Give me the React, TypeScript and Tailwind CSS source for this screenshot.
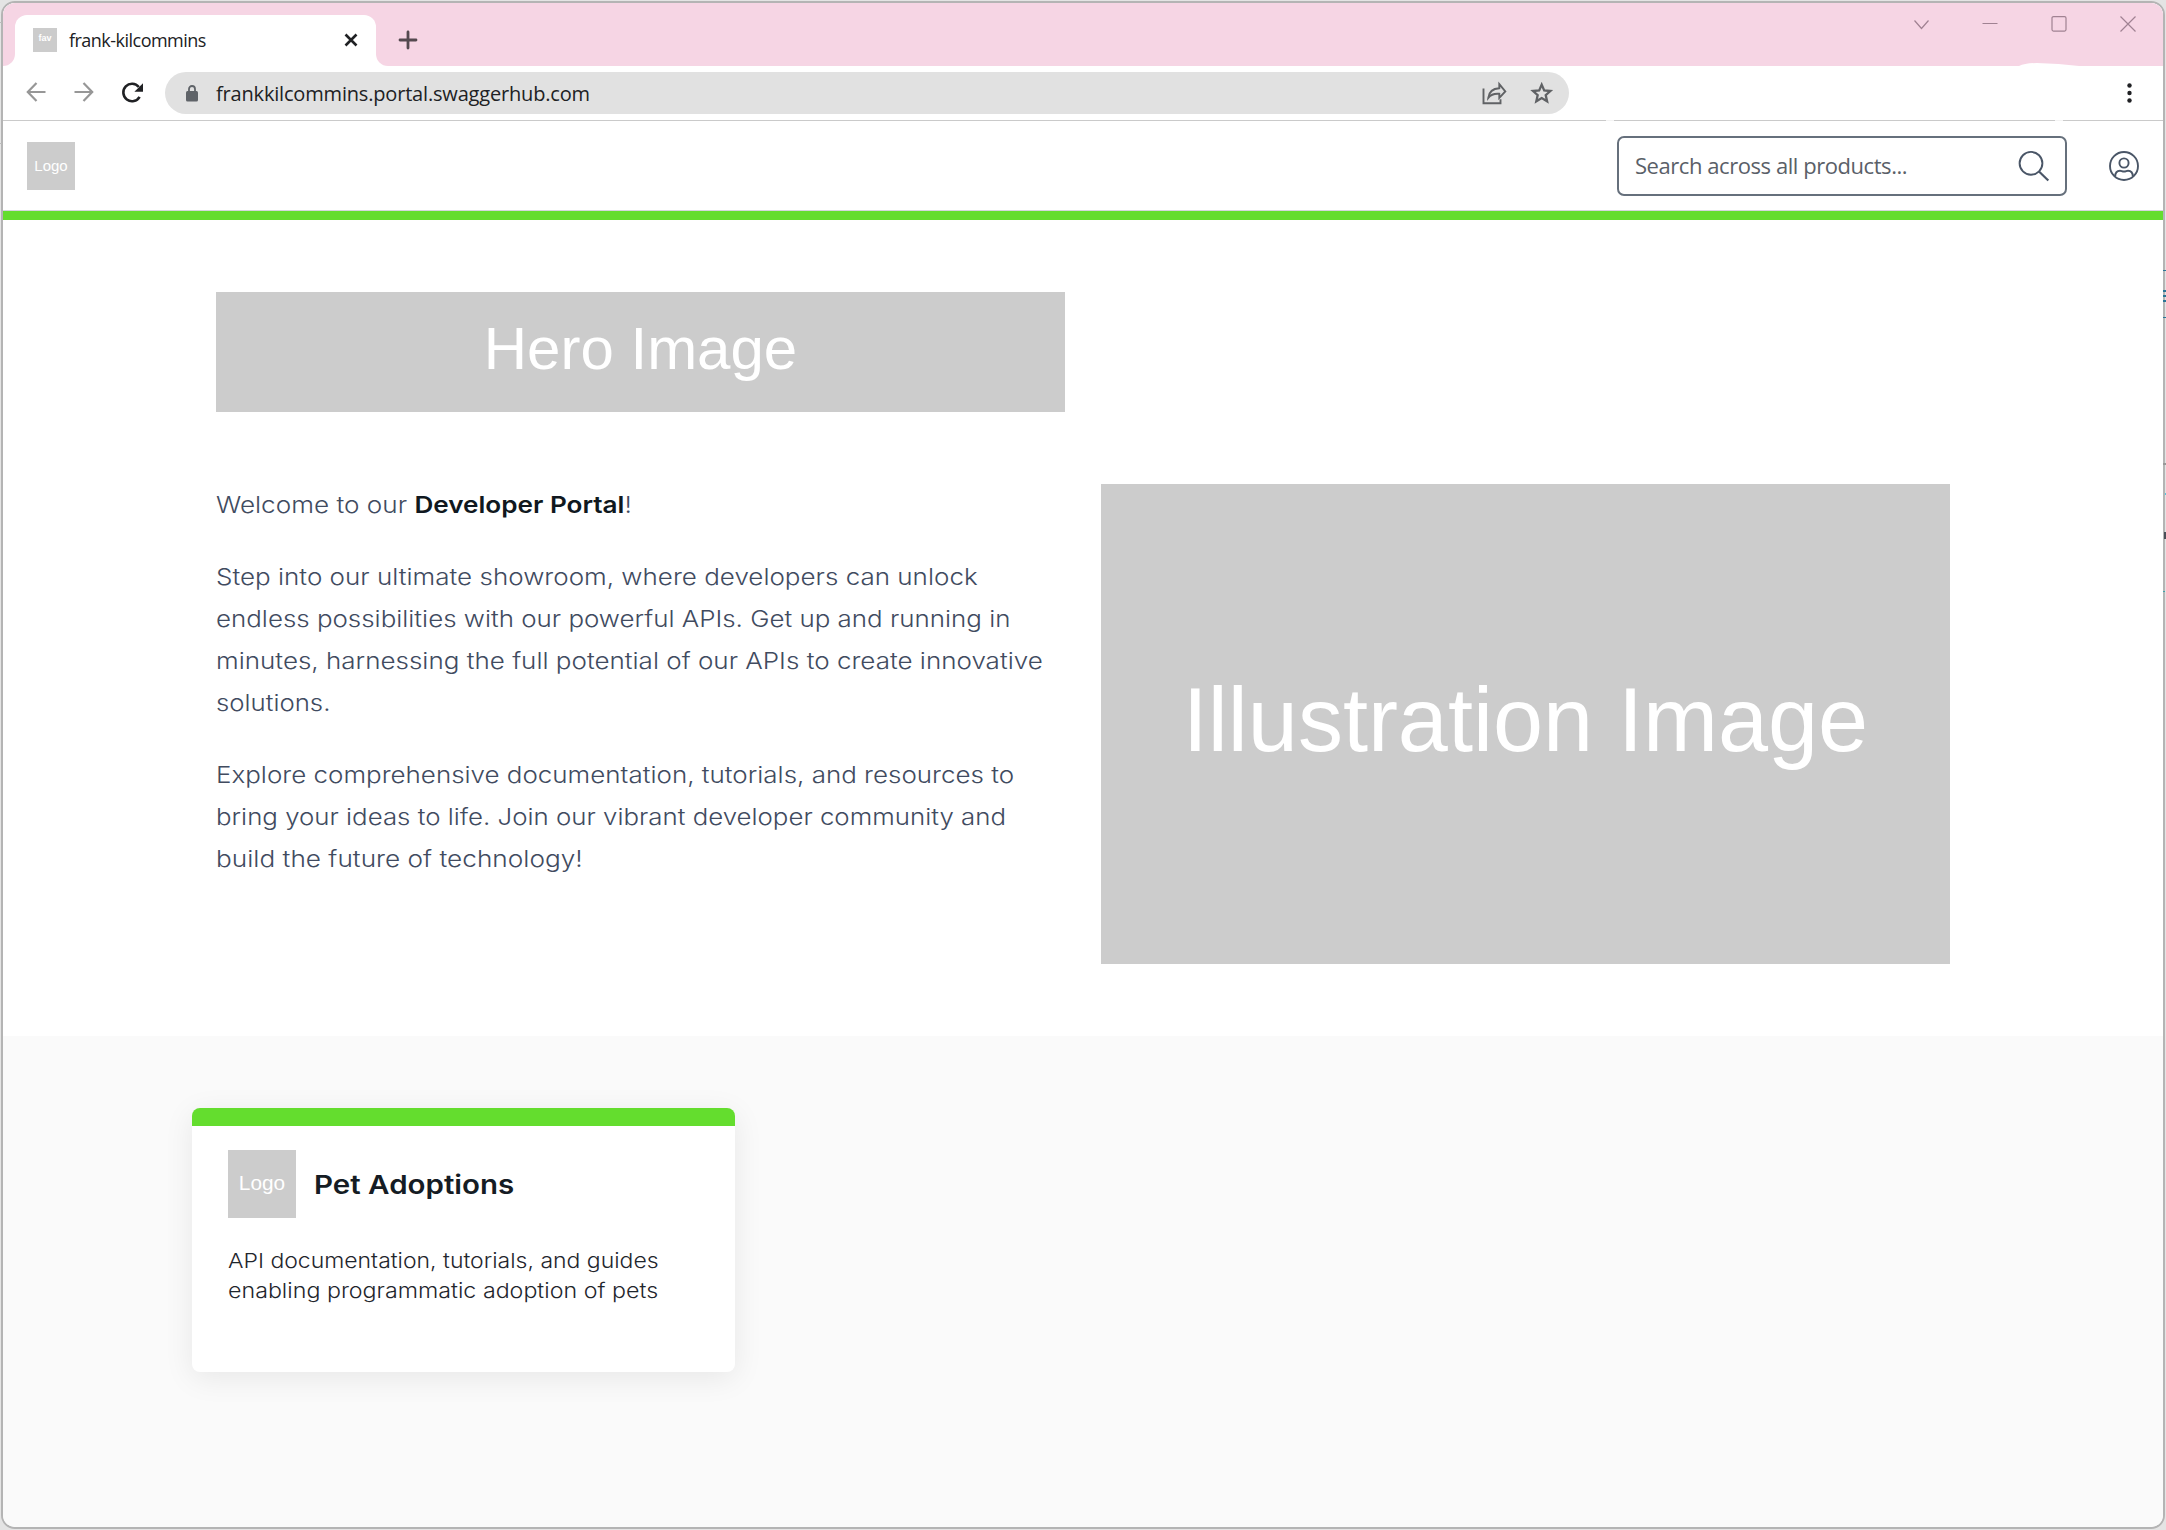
import React from "react";

/* Window chrome: tab strip with the active tab and window controls. */
function TabStrip() {
  return (
    <div className="relative flex h-[63px] shrink-0">
      <div className="w-3 bg-white">
        <div className="h-full w-full rounded-br-[12px] bg-[#f6d5e4]" />
      </div>
      <div className="bg-[#f6d5e4] pt-3">
        <div className="flex h-[51px] w-[361px] items-center rounded-t-[12px] bg-white pr-[18px] pb-[2px] pl-[18px]">
          <div className="flex size-6 items-center justify-center bg-[#ccc] pb-0.5 font-['Liberation_Sans',sans-serif] text-[9px] leading-none font-bold text-white">
            fav
          </div>
          <span className="ml-3 font-['Open_Sans',sans-serif] text-[18px] leading-none tracking-[-0.52px] text-[#202124]">
            frank-kilcommins
          </span>
          <svg className="ml-auto" width="14" height="14" viewBox="0 0 14 14" stroke="#202124" strokeWidth="2.600">
            <path d="M1.500 1.500l11 11M12.500 1.500l-11 11" />
          </svg>
        </div>
      </div>
      <div className="flex grow bg-white">
        <div className="flex grow items-start justify-between rounded-bl-[12px] bg-[#f6d5e4]">
          <svg className="mt-[27px] ml-[22px]" width="20" height="20" viewBox="0 0 20 20" stroke="#54494f" strokeWidth="2.800" strokeLinecap="round">
            <path d="M10 2v16M2 10h16" />
          </svg>
          <svg className="mt-[12px] mr-[27px]" width="222" height="18" viewBox="0 0 222 18" fill="none" stroke="#a08292" strokeWidth="1.200">
            <path d="M.5 5.500l7 8 7-8" />
            <path d="M68.500 8.500h15" />
            <rect x="138" y="1.600" width="14" height="14.500" rx="1.500" />
            <path d="M206.500 1.500l15 15M221.500 1.500l-15 15" />
          </svg>
        </div>
      </div>
      <svg className="absolute right-[84px] bottom-0" width="60" height="3" viewBox="0 0 60 3" fill="#fff">
        <path d="M0 3Q6 0 18 0q22 .5 42 3z" />
      </svg>
    </div>
  );
}

function Toolbar() {
  return (
    <div className="relative flex h-[55px] shrink-0 items-center border-b border-[#cacaca] bg-white">
      <svg className="ml-[23px]" width="118" height="22" viewBox="0 0 118 22" fill="none" stroke="#979797" strokeWidth="2.200">
        <path d="M19.500 10H2M10.500 1L1.800 10l8.700 9M48.500 10H66M57.500 1l8.700 9-8.700 9" />
        <path d="M113.600 14.800a8.700 8.700 0 1 1-.8-9.800" stroke="#202124" strokeWidth="2.600" />
        <path d="M117 1.200v8.600h-8.600z" fill="#202124" stroke="none" />
      </svg>
      <div className="ml-[21px] flex h-[42px] w-[1404px] items-center rounded-full bg-[#e1e1e1]">
        <svg className="ml-[21px]" width="12" height="18" viewBox="0 0 12 18" fill="none">
          <rect y="7" width="12" height="10.500" rx="1.500" fill="#5f6368" />
          <path d="M3 8V5a3 3 0 0 1 6 0v3" stroke="#5f6368" strokeWidth="1.800" />
        </svg>
        <span className="ml-[18px] pt-px font-['Open_Sans',sans-serif] text-[20px] leading-none tracking-[-0.18px] text-[#202124]">
          frankkilcommins.portal.swaggerhub.com
        </span>
        <svg className="mr-[15px] ml-auto" width="72" height="24" viewBox="0 0 72 24" fill="none" stroke="#606265" strokeWidth="1.900">
          <path d="M1.500 7.500v14.800h17v-4" />
          <path d="M17.300 3.200l6 7.200-6 6.400v-4c-5.500-.5-8.500.8-11 4 .6-5.200 4-9.300 11-9.600z" />
          <path d="M59.700 3.600l2.500 5.800 6.200.6-4.700 4.100 1.400 6.200-5.400-3.300-5.400 3.300 1.400-6.200-4.700-4.100 6.200-.6z" strokeWidth="2.300" />
        </svg>
      </div>
      <svg className="mr-[31px] ml-auto" width="5" height="21" viewBox="0 0 5 21" fill="#202124">
        <circle cx="2.500" cy="2.500" r="2.200" />
        <circle cx="2.500" cy="10" r="2.200" />
        <circle cx="2.500" cy="17.500" r="2.200" />
      </svg>
      <div className="absolute right-[549px] -bottom-px h-px w-2 bg-white/80" />
      <div className="absolute right-[100px] -bottom-px h-px w-2 bg-white/80" />
    </div>
  );
}

function PortalHeader() {
  return (
    <header className="flex h-[99px] shrink-0 items-center border-b-[9px] border-[#64dd2e]">
      <div className="flex h-[90px] grow items-center border-b border-[#d5d5dc]">
        <div className="ml-6 flex size-12 items-center justify-center bg-[#ccc] pb-px font-['Liberation_Sans',sans-serif] text-[15px] leading-none text-white">
          Logo
        </div>
        <div className="mr-[24px] ml-auto flex items-center">
          <div className="flex h-[60px] w-[450px] items-center justify-between rounded-[7px] border-2 border-[#66707c] pr-[15px] pl-[16px]">
            <span className="pb-[2px] font-['Open_Sans',sans-serif] text-[22px] leading-none tracking-[-0.44px] text-[#5a6068]">
              Search across all products...
            </span>
            <svg width="32" height="32" viewBox="0 0 32 32" fill="none" stroke="#4a5667" strokeWidth="1.900">
              <circle cx="13" cy="13.300" r="11.400" />
              <path d="M21 21.500l9.300 9" strokeWidth="2.200" />
            </svg>
          </div>
          <svg className="ml-[42px]" width="30" height="30" viewBox="0 0 30 30" fill="none" stroke="#4a5667" strokeWidth="1.900">
            <circle cx="15" cy="15" r="14" />
            <circle cx="15" cy="12" r="4.600" />
            <path d="M6.200 25.500c0-4 1.800-5.800 4.800-5.800 1.500 0 2 .8 4 .8s2.500-.8 4-.8c3 0 4.800 1.800 4.800 5.800" />
          </svg>
        </div>
      </div>
    </header>
  );
}

function Placeholder({ className, children }: { className: string; children: string }) {
  return (
    <div className={`flex items-center justify-center bg-[#ccc] font-['Liberation_Sans',sans-serif] leading-none text-white ${className}`}>
      {children}
    </div>
  );
}

/* One line of wide-set copy; `stretch` is a horizontal scale class. */
function Line({ children, stretch = "scale-x-[1.125]" }: { children: React.ReactNode; stretch?: string }) {
  return <span className={`block origin-left whitespace-nowrap ${stretch}`}>{children}</span>;
}

function Hero() {
  return (
    <section className="grid shrink-0 grid-cols-[849px_849px] gap-x-9 gap-y-[72px] bg-white py-[72px] pl-[213px]">
      <Placeholder className="h-[120px] pb-[7px] text-[60px]">Hero Image</Placeholder>
      <div />
      <div className="space-y-[30px] font-['Inter',sans-serif] text-[23px] leading-[42px] font-[350] text-[#414b5f]">
        <p>
          <Line stretch="scale-x-[1.135]">
            Welcome to our <strong className="font-[580] text-[#101820]">Developer Portal</strong>!
          </Line>
        </p>
        <p>
          <Line stretch="scale-x-[1.130]">Step into our ultimate showroom, where developers can unlock</Line>
          <Line stretch="scale-x-[1.126]">endless possibilities with our powerful APIs. Get up and running in</Line>
          <Line stretch="scale-x-[1.130]">minutes, harnessing the full potential of our APIs to create innovative</Line>
          <Line stretch="scale-x-[1.120]">solutions.</Line>
        </p>
        <p>
          <Line stretch="scale-x-[1.128]">Explore comprehensive documentation, tutorials, and resources to</Line>
          <Line stretch="scale-x-[1.123]">bring your ideas to life. Join our vibrant developer community and</Line>
          <Line stretch="scale-x-[1.139]">build the future of technology!</Line>
        </p>
      </div>
      <Placeholder className="h-[480px] pb-[9px] text-[90px]">Illustration Image</Placeholder>
    </section>
  );
}

function Products() {
  return (
    <section className="grow bg-[#fafafa] pt-[72px] pl-[189px]">
      <article className="h-[264px] w-[543px] overflow-hidden rounded-[8px] border-t-[18px] border-[#64dd2e] bg-white px-9 pt-6 font-['Inter',sans-serif] shadow-[0_6px_30px_rgba(0,0,0,0.08)]">
        <div className="flex items-center">
          <Placeholder className="size-[68px] pb-[2px] text-[20.8px]">Logo</Placeholder>
          <h2 className="ml-[18px] pt-[2px] text-[26px] leading-none font-[580] text-[#151c24]">
            <Line stretch="scale-x-[1.135]">Pet Adoptions</Line>
          </h2>
        </div>
        <p className="mt-[28px] text-[20.500px] leading-[30px] font-[350] text-[#1f262d]">
          <Line stretch="scale-x-[1.121]">API documentation, tutorials, and guides</Line>
          <Line stretch="scale-x-[1.133]">enabling programmatic adoption of pets</Line>
        </p>
      </article>
    </section>
  );
}

/* Slivers of the windows behind, seen at the frame's edges. */
function EdgeMarks() {
  return (
    <>
      <div className="absolute top-[270px] right-0 h-px w-[3px] bg-[#2b7596]" />
      <div className="absolute top-[290px] right-0 h-[2px] w-[3px] bg-[#2b7596]" />
      <div className="absolute top-[295px] right-0 h-[2px] w-[3px] bg-[#2b7596]" />
      <div className="absolute top-[300px] right-0 h-[2px] w-[3px] bg-[#2b7596]" />
      <div className="absolute top-[317px] right-0 h-px w-[3px] bg-[#2b7596]" />
      <div className="absolute top-[463px] right-0 h-[2px] w-[3px] bg-[#999]" />
      <div className="absolute top-[493px] right-0 h-[2px] w-px bg-[#5cc3dc]" />
      <div className="absolute top-[532px] right-0 h-[7px] w-[2px] bg-[#4a4f58]" />
      <div className="absolute top-[591px] right-px h-px w-[2px] bg-[#3fa0a8]" />
      <div className="absolute top-[22px] left-0 h-px w-[2px] bg-[#bbb]" />
      <div className="absolute top-[143px] left-0 h-px w-[2px] bg-[#bbb]" />
    </>
  );
}

export default function App() {
  return (
    <div className="relative h-[1530px] w-[2166px] overflow-hidden bg-[#e4e4e4] p-px">
      <div className="flex h-full flex-col overflow-hidden rounded-[14px] border-2 border-[#b4b4b4] bg-white">
        <TabStrip />
        <Toolbar />
        <PortalHeader />
        <Hero />
        <Products />
      </div>
      <EdgeMarks />
    </div>
  );
}
